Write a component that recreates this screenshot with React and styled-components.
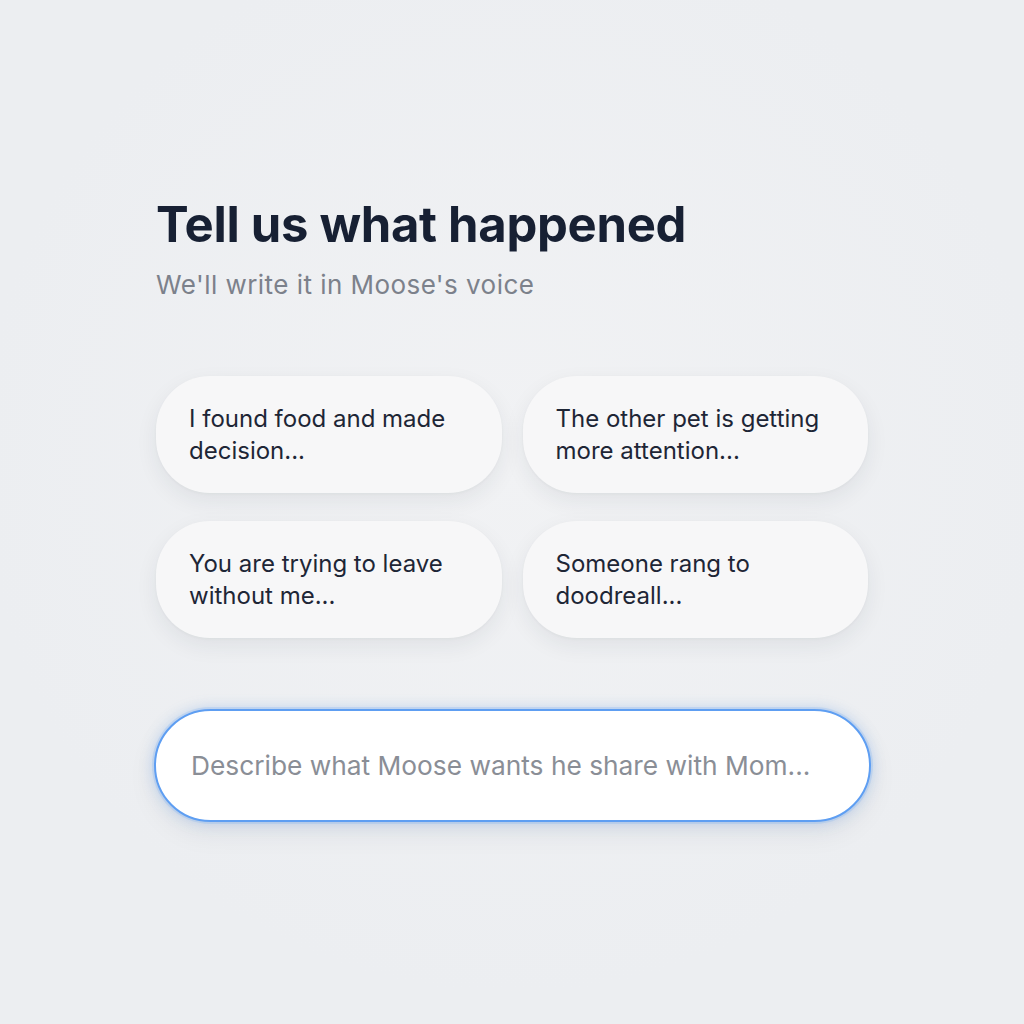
import React from 'react';
import styled, { createGlobalStyle } from 'styled-components';

const GlobalStyle = createGlobalStyle`
  html, body {
    margin: 0;
    padding: 0;
    background: #eceef1;
  }
  body {
    font-family: Inter, "Noto Sans", "Liberation Sans", sans-serif;
  }
`;

const Page = styled.div`
  min-height: 1024px;
  display: flex;
  justify-content: center;
  background: radial-gradient(circle at 50% 45%, #f1f2f4 0%, #eceef1 70%);
`;

const Content = styled.div`
  width: 712px;
  padding-top: 195px;
  display: flex;
  flex-direction: column;
`;

const Title = styled.h1`
  margin: 0;
  font-size: 49px;
  line-height: 60px;
  font-weight: 700;
  color: #172033;
  letter-spacing: -0.3px;
`;

const Subtitle = styled.p`
  margin: 13px 0 0;
  font-size: 26px;
  line-height: 34px;
  color: #7c818b;
  letter-spacing: 0.45px;
`;

const Grid = styled.div`
  margin-top: 74px;
  display: grid;
  grid-template-columns: 1fr 1fr;
  column-gap: 21px;
  row-gap: 28px;
`;

const Card = styled.button`
  height: 117px;
  padding: 0 28px 0 33px;
  border: none;
  border-radius: 54px;
  background: #f7f7f8;
  box-shadow: 0 8px 22px rgba(30, 40, 60, 0.07), 0 1px 3px rgba(30, 40, 60, 0.04);
  text-align: left;
  font-family: inherit;
  font-size: 24px;
  line-height: 32px;
  color: #1e2636;
  cursor: pointer;
`;

const InputWrap = styled.div`
  margin-top: 71px;
  margin-left: -2px;
  margin-right: -3px;
`;

const TextInput = styled.input`
  box-sizing: border-box;
  width: 100%;
  height: 113px;
  padding: 0 35px;
  border: 2px solid #5e9ef2;
  border-radius: 57px;
  background: #ffffff;
  box-shadow: 0 0 0 2px rgba(94, 158, 242, 0.18), 0 0 14px rgba(94, 158, 242, 0.35),
    0 10px 28px rgba(30, 40, 60, 0.08);
  font-family: inherit;
  font-size: 26.3px;
  color: #1d2535;
  outline: none;

  &::placeholder {
    color: #8a8e96;
  }
`;

const prompts = [
  'I found food and made decision...',
  'The other pet is getting more attention...',
  'You are trying to leave without me...',
  'Someone rang to doodreall...',
];

const App = () => {
  return (
    <>
      <GlobalStyle />
      <Page>
        <Content>
          <Title>Tell us what happened</Title>
          <Subtitle>We'll write it in Moose's voice</Subtitle>
          <Grid>
            {prompts.map((p) => (
              <Card key={p} type="button">
                {p}
              </Card>
            ))}
          </Grid>
          <InputWrap>
            <TextInput
              type="text"
              placeholder="Describe what Moose wants he share with Mom..."
            />
          </InputWrap>
        </Content>
      </Page>
    </>
  );
};

export default App;
